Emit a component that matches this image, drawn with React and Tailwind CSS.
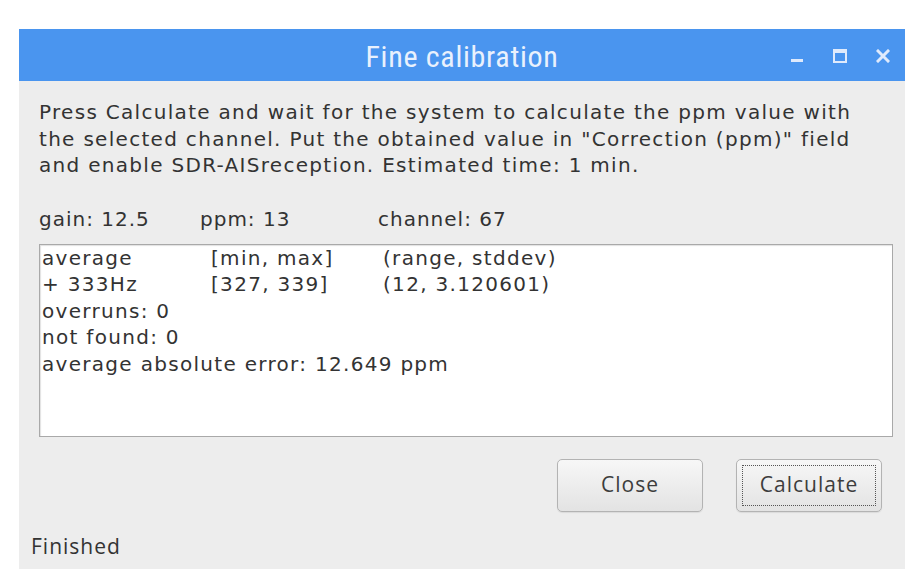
import React from 'react';

function TitleControls() {
  return (
    <div className="absolute right-[15px] top-0 h-full flex items-center gap-[29px]">
      <svg width="14" height="14" viewBox="0 0 14 14" className="mt-[1px]">
        <rect x="1" y="10" width="12" height="3" fill="#dfeafc" />
      </svg>
      <svg width="14" height="14" viewBox="0 0 14 14" className="mt-[1px]">
        <rect x="1" y="1" width="12" height="12" fill="none" stroke="#dfeafc" strokeWidth="2" />
        <rect x="1" y="1" width="12" height="3" fill="#dfeafc" />
      </svg>
      <svg width="14" height="14" viewBox="0 0 14 14" className="mt-[1px]">
        <path d="M2 2 L12 12 M12 2 L2 12" stroke="#dfeafc" strokeWidth="3" strokeLinecap="square" />
      </svg>
    </div>
  );
}

function Button({ label, focused }) {
  return (
    <button className="w-[146px] h-[53px] rounded-[5px] border border-[#b3b3b3] bg-gradient-to-b from-[#f7f7f7] to-[#e3e3e3] shadow-[0_1px_1px_rgba(0,0,0,0.08)] flex items-center justify-center p-[5px]">
      <span
        className={
          'w-full h-full flex items-center justify-center font-["Open_Sans",sans-serif] text-[21px] tracking-[1px] text-[#3d3d3d] ' +
          (focused ? 'border border-dotted border-[#555]' : '')
        }
      >
        {label}
      </span>
    </button>
  );
}

export default function App() {
  return (
    <div className="w-[911px] h-[569px] bg-white overflow-hidden pt-[29px] pl-[19px]">
      <div className="w-[886px] h-[540px] bg-[#ededed] flex flex-col">
        {/* title bar */}
        <div className="relative h-[52px] bg-[#4a95ef] flex items-center justify-center shrink-0">
          <span className="font-['Roboto_Condensed',Roboto,sans-serif] text-[30px] tracking-[0.7px] text-[#e9f1fd] mt-[2px]">
            Fine calibration
          </span>
          <TitleControls />
        </div>

        {/* body */}
        <div className="flex flex-col flex-1 px-[20px] pt-[18px] text-[#333] font-['DejaVu_Sans','Noto_Sans',sans-serif]">
          <p className="text-[20px] leading-[26.5px] tracking-[1.3px] whitespace-nowrap">
            Press Calculate and wait for the system to calculate the ppm value with
            <br />
            the selected channel. Put the obtained value in "Correction (ppm)" field
            <br />
            and enable SDR-AISreception. Estimated time: 1 min.
          </p>

          <div className="flex text-[20px] leading-[26px] tracking-[1px] mt-[27px]">
            <span className="w-[161px]">gain: 12.5</span>
            <span className="w-[178px]">ppm: 13</span>
            <span>channel: 67</span>
          </div>

          <div className="mt-[12px] h-[193px] w-[854px] bg-white border border-[#a9a9a9] shadow-[inset_1px_1px_1px_rgba(0,0,0,0.12)] pl-[2px] text-[20px] leading-[26.5px] tracking-[1.3px] whitespace-nowrap">
            <div className="flex">
              <span className="w-[169px]">average</span>
              <span className="w-[172px]">[min, max]</span>
              <span>(range, stddev)</span>
            </div>
            <div className="flex">
              <span className="w-[169px]">+ 333Hz</span>
              <span className="w-[172px]">[327, 339]</span>
              <span>(12, 3.120601)</span>
            </div>
            <div>overruns: 0</div>
            <div>not found: 0</div>
            <div>average absolute error: 12.649 ppm</div>
          </div>

          <div className="flex justify-end gap-[33px] mt-[22px] pr-[3px]">
            <Button label="Close" />
            <Button label="Calculate" focused />
          </div>

          <div className="mt-[21px] -ml-[8px] font-['Open_Sans',sans-serif] text-[21px] tracking-[1px] leading-[26px]">
            Finished
          </div>
        </div>
      </div>
    </div>
  );
}
